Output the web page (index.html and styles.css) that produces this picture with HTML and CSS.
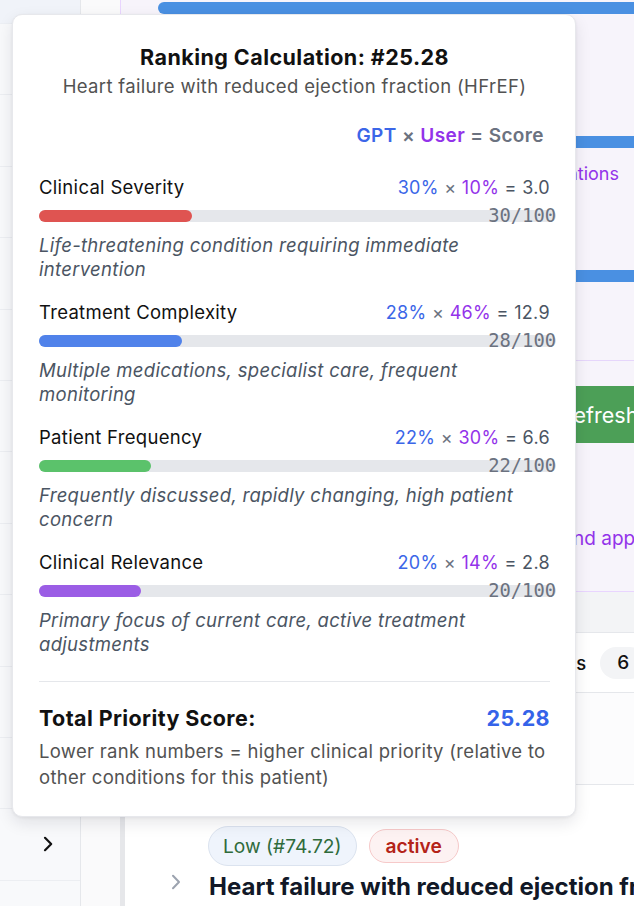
FILE: index.html
```html
<!DOCTYPE html>
<html lang="en">
<head>
<meta charset="utf-8">
<title>Ranking Calculation</title>
<link rel="stylesheet" href="styles.css">
</head>
<body>
<div class="app">
  <aside class="sidebar">
    <div class="side-head"></div>
    <div class="side-row"><svg class="chev" viewBox="0 0 10 16"><path d="M2 1.8 L8.2 8 L2 14.2"/></svg></div>
    <div class="side-row"><svg class="chev" viewBox="0 0 10 16"><path d="M2 1.8 L8.2 8 L2 14.2"/></svg></div>
    <div class="side-row"><svg class="chev" viewBox="0 0 10 16"><path d="M2 1.8 L8.2 8 L2 14.2"/></svg></div>
    <div class="side-row"><svg class="chev" viewBox="0 0 10 16"><path d="M2 1.8 L8.2 8 L2 14.2"/></svg></div>
    <div class="side-row"><svg class="chev" viewBox="0 0 10 16"><path d="M2 1.8 L8.2 8 L2 14.2"/></svg></div>
    <div class="side-row"><svg class="chev" viewBox="0 0 10 16"><path d="M2 1.8 L8.2 8 L2 14.2"/></svg></div>
    <div class="side-row"><svg class="chev" viewBox="0 0 10 16"><path d="M2 1.8 L8.2 8 L2 14.2"/></svg></div>
    <div class="side-row"><svg class="chev" viewBox="0 0 10 16"><path d="M2 1.8 L8.2 8 L2 14.2"/></svg></div>
    <div class="side-row"><svg class="chev" viewBox="0 0 10 16"><path d="M2 1.8 L8.2 8 L2 14.2"/></svg></div>
    <div class="side-row"><svg class="chev" viewBox="0 0 10 16"><path d="M2 1.8 L8.2 8 L2 14.2"/></svg></div>
    <div class="side-row"><svg class="chev" viewBox="0 0 10 16"><path d="M2 1.8 L8.2 8 L2 14.2"/></svg></div>
    <div class="side-row"><svg class="chev" viewBox="0 0 10 16"><path d="M2 1.8 L8.2 8 L2 14.2"/></svg></div>
    <div class="side-row"></div>
  </aside>
  <div class="rail"></div>
  <main class="main">
    <section class="gpt-panel">
      <div class="meter"></div>
      <div class="panel-block-a"></div>
      <div class="meter"></div>
      <div class="link-row"><a class="link">View explanations</a></div>
      <div class="meter meter-3"></div>
      <div class="panel-divider"></div>
      <button class="refresh">Refresh GPT Rankings</button>
      <p class="hint">Adjust weights and apply to ranking</p>
    </section>
    <div class="list-gap"></div>
    <div class="list-head"><span class="list-title">Conditions</span><span class="count">6</span></div>
    <div class="list-spacer"></div>
    <article class="condition">
      <div class="badges">
        <span class="badge badge-low">Low (#74.72)</span>
        <span class="badge badge-active">active</span>
      </div>
      <div class="cond-row">
        <svg class="cond-chev" viewBox="0 0 10 16"><path d="M2 1.8 L8 8 L2 14.2"/></svg>
        <h2 class="cond-title">Heart failure with reduced ejection fraction (HFrEF)</h2>
      </div>
    </article>
  </main>

  <div class="popover">
    <h1 class="pop-title">Ranking Calculation: #25.28</h1>
    <p class="pop-sub">Heart failure with reduced ejection fraction (HFrEF)</p>
    <div class="legend"><span class="gpt">GPT</span> <span class="x">×</span> <span class="user">User</span> = Score</div>

    <div class="factors">
      <div class="factor">
        <div class="factor-head">
          <span class="factor-name">Clinical Severity</span>
          <span class="formula"><span class="gpt">30%</span> <span class="x">×</span> <span class="user">10%</span> = 3.0</span>
        </div>
        <div class="track-wrap">
          <div class="track"><div class="fill fill-red" style="width:30%"></div></div>
          <span class="track-label">30/100</span>
        </div>
        <p class="factor-desc">Life-threatening condition requiring immediate intervention</p>
      </div>

      <div class="factor">
        <div class="factor-head">
          <span class="factor-name">Treatment Complexity</span>
          <span class="formula"><span class="gpt">28%</span> <span class="x">×</span> <span class="user">46%</span> = 12.9</span>
        </div>
        <div class="track-wrap">
          <div class="track"><div class="fill fill-blue" style="width:28%"></div></div>
          <span class="track-label">28/100</span>
        </div>
        <p class="factor-desc">Multiple medications, specialist care, frequent monitoring</p>
      </div>

      <div class="factor">
        <div class="factor-head">
          <span class="factor-name">Patient Frequency</span>
          <span class="formula"><span class="gpt">22%</span> <span class="x">×</span> <span class="user">30%</span> = 6.6</span>
        </div>
        <div class="track-wrap">
          <div class="track"><div class="fill fill-green" style="width:22%"></div></div>
          <span class="track-label">22/100</span>
        </div>
        <p class="factor-desc">Frequently discussed, rapidly changing, high patient concern</p>
      </div>

      <div class="factor">
        <div class="factor-head">
          <span class="factor-name">Clinical Relevance</span>
          <span class="formula"><span class="gpt">20%</span> <span class="x">×</span> <span class="user">14%</span> = 2.8</span>
        </div>
        <div class="track-wrap">
          <div class="track"><div class="fill fill-purple" style="width:20%"></div></div>
          <span class="track-label">20/100</span>
        </div>
        <p class="factor-desc">Primary focus of current care, active treatment adjustments</p>
      </div>
    </div>

    <div class="pop-divider"></div>
    <div class="total-row">
      <span>Total Priority Score:</span>
      <span class="total-value">25.28</span>
    </div>
    <p class="total-note">Lower rank numbers = higher clinical priority (relative to other conditions for this patient)</p>
  </div>
</div>
</body>
</html>
```

FILE: styles.css
```css
* { box-sizing: border-box; }

html, body {
  margin: 0;
  padding: 0;
  width: 634px;
  height: 906px;
  overflow: hidden;
  background: #ffffff;
  font-family: Inter, "Noto Sans", sans-serif;
}

.app {
  position: relative;
  display: flex;
  width: 634px;
  height: 906px;
  overflow: hidden;
}

/* ---------- left sidebar ---------- */
.sidebar {
  flex: 0 0 81px;
  background: #f8f9fb;
  border-right: 1px solid #e5e7eb;
  display: flex;
  flex-direction: column;
}
.side-head {
  flex: 0 0 24px;
  background: #f0f3f9;
  border-bottom: 1px solid #eceff4;
}
.side-row {
  flex: 0 0 71.4px;
  border-bottom: 1px solid #eceef2;
  display: flex;
  align-items: center;
  justify-content: flex-end;
  padding-right: 27px;
}
.chev {
  width: 10px;
  height: 16px;
  fill: none;
  stroke: #111111;
  stroke-width: 2.2;
  stroke-linecap: round;
  stroke-linejoin: round;
}

.rail {
  flex: 0 0 39px;
  background: #fafafb;
}

/* ---------- main column ---------- */
.main {
  flex: 1 1 auto;
  min-width: 0;
  display: flex;
  flex-direction: column;
}

.gpt-panel {
  flex: 0 0 592px;
  background: #f7f4fb;
  border-left: 1px solid #e9d5ff;
  border-bottom: 1px solid #e9d5ff;
  padding: 2px 0 0 37px;
  overflow: hidden;
}
.meter {
  height: 12px;
  background: #4a90e2;
  border-radius: 6px 0 0 6px;
}
.panel-block-a { height: 122px; }
.link-row {
  margin-top: 13px;
  height: 26px;
  text-align: right;
  padding-right: 15px;
  font-size: 18px;
  line-height: 26px;
}
.link { color: #9333ea; }
.meter-3 { margin-top: 83px; }
.panel-divider {
  margin-top: 78px;
  border-top: 1px solid #e6d6fb;
}
.refresh {
  display: block;
  margin-top: 25px;
  width: calc(100% + 300px);
  height: 57px;
  border: 0;
  border-radius: 6px 0 0 6px;
  background: #4c9f57;
  color: #ffffff;
  font-family: Inter, sans-serif;
  font-size: 21.5px;
  text-align: left;
  white-space: nowrap;
  padding-left: 402px;
}
.hint {
  margin: 83px 0 0;
  font-size: 19px;
  line-height: 26px;
  color: #9333ea;
  white-space: nowrap;
  padding-left: 267px;
}

.list-gap {
  flex: 0 0 40px;
  background: #f3f4f6;
}
.list-head {
  flex: 0 0 61px;
  background: #ffffff;
  border-top: 1px solid #e5e7eb;
  border-bottom: 1px solid #e5e7eb;
  display: flex;
  align-items: center;
  padding-left: 371px;
  gap: 14px;
  white-space: nowrap;
}
.list-title {
  font-size: 18.5px;
  font-weight: 500;
  color: #111111;
}
.count {
  display: inline-flex;
  align-items: center;
  flex: 0 0 auto;
  height: 32px;
  padding: 0 17px;
  border-radius: 16px;
  background: #f3f4f6;
  font-size: 19px;
  font-weight: 500;
  color: #111111;
}
.list-spacer {
  flex: 0 0 91px;
  background: #fcfcfd;
}
.condition {
  flex: 1 1 auto;
  border-top: 1px solid #e5e7eb;
  border-left: 5px solid #e6e7ea;
  background: #ffffff;
  padding: 41px 0 0 83px;
  overflow: hidden;
}
.badges {
  display: flex;
  align-items: center;
  gap: 12px;
}
.badge {
  display: inline-flex;
  align-items: center;
  border-radius: 20px;
  font-size: 19.2px;
  white-space: nowrap;
}
.badge-low {
  height: 40px;
  padding: 0 14px;
  background: #eff4fc;
  border: 1px solid #dbe3ef;
  color: #2f6b3b;
}
.badge-active {
  height: 34px;
  padding: 0 16px;
  background: #fdf2f2;
  border: 1px solid #f6c9c9;
  color: #b42318;
  font-weight: 600;
}
.cond-row {
  display: flex;
  align-items: center;
  margin-left: -37px;
  margin-top: 5px;
  gap: 28px;
}
.cond-chev {
  flex: 0 0 10px;
  height: 16px;
  margin-top: -10px;
  fill: none;
  stroke: #9ca3af;
  stroke-width: 2;
  stroke-linecap: round;
  stroke-linejoin: round;
}
.cond-title {
  margin: 0;
  font-size: 24px;
  line-height: 32px;
  font-weight: 700;
  color: #111827;
  white-space: nowrap;
}

/* ---------- popover ---------- */
.popover {
  position: absolute;
  left: 12px;
  top: 14px;
  width: 564px;
  background: #ffffff;
  border: 1px solid #e7e8ec;
  border-radius: 10px;
  box-shadow: 0 6px 16px rgba(17, 24, 39, 0.10), 0 1px 3px rgba(17, 24, 39, 0.06);
  padding: 28px 25px 26px 26px;
  font-family: Inter, sans-serif;
}
.pop-title {
  margin: 0;
  text-align: center;
  font-size: 21.5px;
  letter-spacing: 0.45px;
  line-height: 28px;
  font-weight: 700;
  color: #111111;
}
.pop-sub {
  margin: 3px 0 0;
  text-align: center;
  font-size: 18.5px;
  letter-spacing: 0.33px;
  line-height: 24px;
  color: #525252;
}
.legend {
  margin-top: 26px;
  text-align: right;
  padding-right: 6px;
  font-size: 19px;
  letter-spacing: 0.4px;
  line-height: 24px;
  font-weight: 600;
  color: #6b7280;
}
.gpt { color: #3b66e8; }
.user { color: #9333ea; }
.x { color: #6b7280; }

.factors {
  margin-top: 27px;
  display: flex;
  flex-direction: column;
  gap: 19px;
}
.factor-head {
  display: flex;
  justify-content: space-between;
  align-items: baseline;
  height: 24px;
  line-height: 24px;
}
.factor-name {
  color: #111111;
  font-size: 18.5px;
  letter-spacing: 0.3px;
}
.formula {
  color: #4b5563;
  font-size: 18px;
  letter-spacing: 0.33px;
}

.track-wrap {
  position: relative;
  margin-top: 11px;
}
.track {
  height: 12px;
  background: #e5e7eb;
  border-radius: 6px;
  padding-right: 6px;
  margin-right: -6px;
}
.fill {
  height: 12px;
  border-radius: 6px;
}
.fill-red { background: #df5451; }
.fill-blue { background: #5082ea; }
.fill-green { background: #5bc26b; }
.fill-purple { background: #9b5de5; }
.track-label {
  position: absolute;
  right: -6px;
  top: 50%;
  transform: translateY(-50%);
  font-family: "DejaVu Sans Mono", monospace;
  font-size: 18.8px;
  line-height: 1;
  color: #6b7280;
}
.factor-desc {
  margin: 11px 0 0;
  font-size: 18.5px;
  letter-spacing: 0.3px;
  line-height: 24px;
  font-style: italic;
  color: #4b5563;
}

.pop-divider {
  margin-top: 25px;
  border-top: 1px solid #e5e7eb;
}
.total-row {
  margin-top: 22px;
  display: flex;
  justify-content: space-between;
  font-size: 21.5px;
  letter-spacing: 0.4px;
  line-height: 28px;
  font-weight: 700;
  color: #111111;
}
.total-value { color: #3563e9; }
.total-note {
  margin: 6px 0 0;
  font-size: 18.5px;
  letter-spacing: 0.3px;
  line-height: 26px;
  color: #525252;
}
```
